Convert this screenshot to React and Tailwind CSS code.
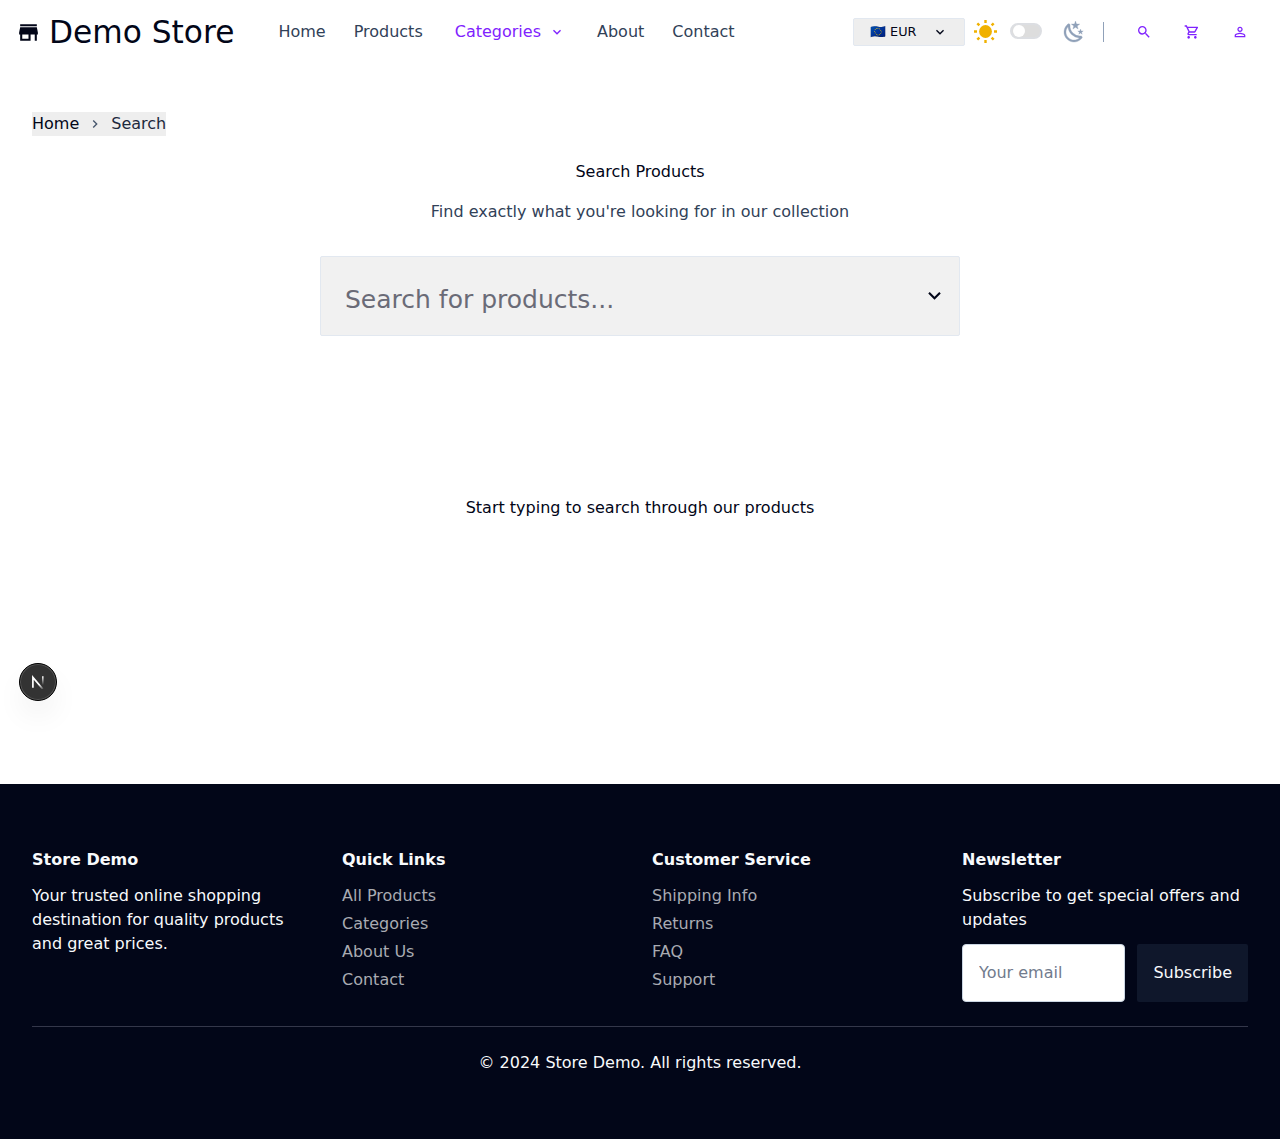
import React from "react";
import { MdStore, MdSearch, MdOutlineShoppingCart, MdPersonOutline, MdKeyboardArrowDown, MdKeyboardArrowRight } from "react-icons/md";

function Sun() {
  return (
    <svg className="size-[23px]" viewBox="0 0 23 23" fill="none" stroke="#f0b100" strokeWidth="2.4">
      <circle cx="11.5" cy="11.5" r="6.4" fill="#f0b100" stroke="none" />
      <path d="M11.5 0v3M11.5 20v3M0 11.5h3M20 11.5h3M3.3 3.3l2.1 2.1M17.6 17.6l2.1 2.1M3.3 19.7l2.1-2.1M17.6 5.4l2.1-2.1" />
    </svg>
  );
}

function Moon() {
  return (
    <svg className="size-6" viewBox="0 0 24 24" fill="#90a1b9" stroke="#90a1b9" strokeWidth="0.3">
      <path d="m17.75 4.09l-2.53 1.94l.91 3.06l-2.63-1.81l-2.63 1.81l.91-3.06l-2.53-1.94L12.44 4l1.06-3l1.06 3zm3.5 6.91l-1.64 1.25l.59 1.98l-1.7-1.17l-1.7 1.17l.59-1.98L15.75 11l2.06-.05L18.5 9l.69 1.95zm-2.28 4.95c.83-.08 1.72 1.1 1.19 1.85c-.32.45-.66.87-1.08 1.27C15.17 23 8.84 23 4.94 19.07c-3.91-3.9-3.91-10.24 0-14.14c.4-.4.82-.76 1.27-1.08c.75-.53 1.93.36 1.85 1.19c-.27 2.86.69 5.83 2.89 8.02a9.96 9.96 0 0 0 8.02 2.89m-1.64 2.02a12.08 12.08 0 0 1-7.8-3.47c-2.17-2.19-3.33-5-3.49-7.82c-2.81 3.14-2.7 7.96.31 10.98c3.02 3.01 7.84 3.12 10.98.31" />
    </svg>
  );
}

function Header() {
  return (
    <header className="flex h-16 items-center pl-4">
      <a className="flex items-center gap-2">
        <MdStore className="size-[25px]" />
        <span className="text-[31.25px] leading-10">Demo Store</span>
      </a>
      <nav className="ml-11 flex items-center text-[#314158]">
        <a>Home</a>
        <a className="ml-7">Products</a>
        <a className="ml-8 flex items-center gap-2 text-[#7f22fe]">
          Categories <MdKeyboardArrowDown className="size-4" />
        </a>
        <a className="ml-8">About</a>
        <a className="ml-7">Contact</a>
      </nav>
      <div className="ml-auto flex items-center">
        <button className="flex h-7 w-28 items-center rounded-xs border border-[#e2e8f0] bg-[#eee] pl-4 text-[12.8px]">
          <span>🇪🇺 EUR</span>
          <MdKeyboardArrowDown className="ml-[15.5px] size-4" />
        </button>
        <div className="mb-0.5 ml-[9px]"><Sun /></div>
        <div className="mb-0.5 ml-[13px] flex h-4 w-8 items-center rounded-full border-2 border-[#dcdee2] bg-[#ddd]">
          <span className="ml-px size-3 rounded-full bg-white" />
        </div>
        <div className="ml-5"><Moon /></div>
        <div className="ml-[17px] h-5 w-px bg-[#90a1b9]" />
        <div className="mr-8 ml-8 flex gap-8 text-[#7f22fe]">
          <MdSearch className="size-4" />
          <MdOutlineShoppingCart className="size-4" />
          <MdPersonOutline className="size-4" />
        </div>
      </div>
    </header>
  );
}

function LinkColumn({ title, links }) {
  return (
    <div>
      <h3 className="font-bold">{title}</h3>
      <ul className="mt-3 space-y-1 text-[#a9abb2]">
        {links.map((l) => <li key={l}>{l}</li>)}
      </ul>
    </div>
  );
}

function Footer() {
  return (
    <footer className="h-[355px] bg-[#020618] px-8 pt-16 text-[#f8fafc]">
      <div className="grid grid-cols-4 gap-6">
        <div>
          <h3 className="font-bold">Store Demo</h3>
          <p className="mt-3">Your trusted online shopping destination for quality products and great prices.</p>
        </div>
        <LinkColumn title="Quick Links" links={["All Products", "Categories", "About Us", "Contact"]} />
        <LinkColumn title="Customer Service" links={["Shipping Info", "Returns", "FAQ", "Support"]} />
        <div>
          <h3 className="font-bold">Newsletter</h3>
          <p className="mt-3">Subscribe to get special offers and updates</p>
          <div className="mt-3 flex gap-3">
            <input placeholder="Your email" className="h-[58px] w-0 flex-1 rounded-sm border border-[#cad5e2] bg-white px-4 pb-0.5 placeholder:text-[#717b8d]" />
            <button className="h-[58px] rounded-xs bg-[#0f172b] px-4">Subscribe</button>
          </div>
        </div>
      </div>
      <div className="mt-6 border-t border-[#34374a] pt-6 text-center">© 2024 Store Demo. All rights reserved.</div>
    </footer>
  );
}

function DevBadge() {
  return (
    <div className="fixed top-[663px] left-[19px] flex size-[38px] items-center justify-center rounded-full border border-black bg-[#333] shadow-[inset_0_0_0_1px_#555,0_16px_32px_-8px_rgba(0,0,0,0.14)]">
      <svg className="size-[14px]" viewBox="0 0 14 14" fill="none" strokeWidth="1.7">
        <defs>
          <linearGradient id="diag" x1="9" y1="9" x2="13" y2="14.5" gradientUnits="userSpaceOnUse">
            <stop stopColor="#fff" />
            <stop offset="1" stopColor="#fff" stopOpacity="0" />
          </linearGradient>
          <linearGradient id="stem" x1="0" y1="1" x2="0" y2="10" gradientUnits="userSpaceOnUse">
            <stop stopColor="#fff" />
            <stop offset="1" stopColor="#fff" stopOpacity="0" />
          </linearGradient>
        </defs>
        <path d="M1.9 12.7V2.4L11.8 14" stroke="url(#diag)" />
        <path d="M11 1.2h1.6v9H11z" fill="url(#stem)" />
      </svg>
    </div>
  );
}

export default function App() {
  return (
    <div className="h-[1139px] bg-white font-['DejaVu_Sans',sans-serif] text-base text-[#020618]">
      <Header />
      <main className="flex h-[720px] flex-col px-8 pt-12">
        <nav className="flex h-6 items-center self-start bg-[#eee]">
          <span>Home</span>
          <MdKeyboardArrowRight className="mx-2 size-4 text-[#45556c]" />
          <span className="text-[#1d293d]">Search</span>
        </nav>
        <h1 className="mt-6 text-center">Search Products</h1>
        <p className="mt-4 text-center text-[#314158]">Find exactly what you're looking for in our collection</p>
        <div className="mt-8 flex h-20 w-[640px] self-center rounded-xs border border-[#e2e8f0] bg-[#f1f1f1] pr-3 pl-6">
          <input placeholder="Search for products..." className="mt-[5px] h-[74px] w-0 flex-1 text-[25px] placeholder:text-[#6a6b77]" />
          <MdKeyboardArrowDown className="mt-[26px] size-[25px]" />
        </div>
        <p className="mt-40 text-center">Start typing to search through our products</p>
      </main>
      <Footer />
      <DevBadge />
    </div>
  );
}
